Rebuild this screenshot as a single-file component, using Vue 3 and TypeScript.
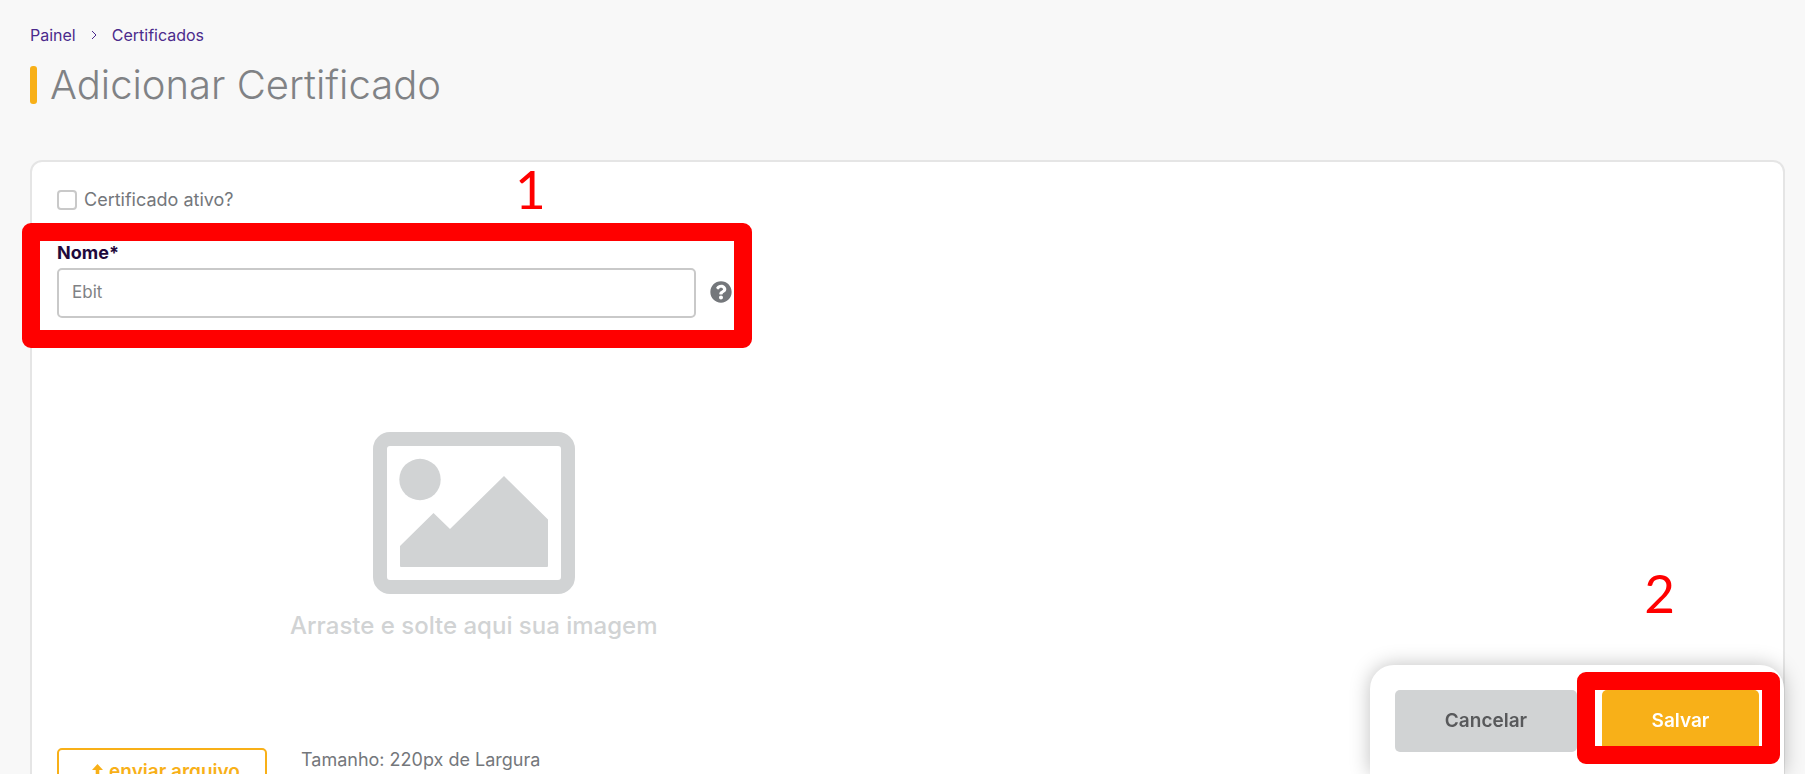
<script setup lang="ts">
import { ref } from 'vue'

const active = ref(false)
const name = ref('Ebit')
</script>

<template>
  <div class="page">
    <nav class="breadcrumb" aria-label="Navegação">
      <a href="#painel">Painel</a>
      <svg class="chevron" viewBox="0 0 6 10" aria-hidden="true"><path d="M1 1l4 4-4 4" /></svg>
      <a href="#certificados">Certificados</a>
    </nav>
    <h1 class="title">Adicionar Certificado</h1>

    <main class="card">
      <label class="check" for="active">
        <input id="active" v-model="active" type="checkbox" />
        <span>Certificado ativo?</span>
      </label>

      <div class="field">
        <label class="field-label" for="name">Nome*</label>
        <div class="field-row">
          <input id="name" v-model="name" class="text-input" type="text" />
          <button class="help" type="button" aria-label="Ajuda">
            <svg viewBox="0 0 512 512" aria-hidden="true">
              <path d="M504 256c0 137-111 248-248 248S8 393 8 256 119 8 256 8s248 111 248 248zM262.700 90c-54.500 0-89.300 23-116.500 63.800-3.500 5.300-2.400 12.400 2.700 16.300l34.700 26.300c5.200 3.900 12.600 3 16.700-2.100 17.900-22.700 30.100-35.800 57.300-35.800 20.400 0 45.700 13.100 45.700 33 0 15-12.400 22.700-32.500 34C247.100 238.500 216 254.900 216 296v4c0 6.600 5.400 12 12 12h56c6.600 0 12-5.400 12-12v-1.300c0-28.500 83.200-29.600 83.200-106.700 0-58-60.200-102-116.500-102zM256 338c-25.400 0-46 20.600-46 46s20.600 46 46 46 46-20.600 46-46-20.600-46-46-46z" />
            </svg>
          </button>
        </div>
        <div class="callout callout-field"></div>
        <span class="step step-one">1</span>
      </div>

      <div class="drop">
        <svg class="picture" viewBox="0 0 202 162" aria-hidden="true">
          <rect x="7" y="7" width="188" height="148" rx="10" fill="none" stroke="currentColor" stroke-width="14" />
          <circle cx="47" cy="47.500" r="20.700" />
          <path d="M27 114l33.500-33L77 97l54-53 44 43.500V134q0 1-1 1H28q-1 0-1-1z" />
        </svg>
        <p>Arraste e solte aqui sua imagem</p>
      </div>

      <div class="upload">
        <button class="send" type="button">
          <svg viewBox="0 0 11 17" aria-hidden="true"><path d="M5.500 0L11 6H7.300V14.500H3.700V6H0z" /></svg>
          enviar arquivo
        </button>
        <p>Tamanho: 220px de Largura</p>
      </div>
    </main>

    <footer class="actions">
      <button class="cancel" type="button">Cancelar</button>
      <button class="save" type="button">Salvar</button>
      <div class="callout callout-save"></div>
      <span class="step step-two">2</span>
    </footer>
  </div>
</template>

<style>
body {
  margin: 0;
  background: #f8f8f8;
}
</style>

<style scoped>
.page {
  box-sizing: border-box;
  height: 100vh;
  overflow: hidden;
  padding: 23px 20px 0 30px;
  background: #f8f8f8;
  color: #74777b;
  font-family: Inter, "Open Sans", sans-serif;
  font-size: 18px;
  line-height: 24px;
}

button,
input {
  box-sizing: border-box;
  margin: 0;
  font: inherit;
}

button {
  cursor: pointer;
}

.breadcrumb {
  display: flex;
  align-items: center;
  gap: 15px;
  font-size: 16px;
  line-height: 24px;
}

.breadcrumb a {
  color: #4b2a8c;
  text-decoration: none;
}

.chevron {
  width: 6px;
  height: 10px;
  fill: none;
  stroke: #4b2a8c;
}

.title {
  display: flex;
  align-items: center;
  gap: 13px;
  margin: 19px 0 56px;
  color: #808285;
  font-size: 40px;
  font-weight: 300;
  line-height: 38px;
}

.title::before {
  content: "";
  width: 7px;
  height: 38px;
  border-radius: 3px;
  background: #f8b018;
}

.card {
  padding: 28px 25px 40px;
  border: 2px solid #e5e5e5;
  border-radius: 12px;
  background: #fff;
}

.check {
  display: flex;
  align-items: center;
  gap: 7px;
  width: fit-content;
  height: 20px;
}

.check input {
  appearance: none;
  width: 20px;
  height: 20px;
  border: 2px solid #c9c9c9;
  border-radius: 4px;
  background: #fff;
}

.check input:checked {
  background: #f8b018;
}

.field {
  position: relative;
  width: 675px;
  max-width: 100%;
  margin-top: 31px;
}

.field-label {
  display: block;
  height: 27px;
  color: #1f0a3c;
  font-weight: 700;
}

.field-row {
  display: flex;
  align-items: center;
  gap: 14px;
}

.text-input {
  flex: 1;
  min-width: 0;
  height: 50px;
  padding: 0 13px 2px;
  border: 2px solid #c9c9c9;
  border-radius: 5px;
  background: #fff;
  color: #808285;
  font-size: 17px;
  outline: none;
}

.help {
  display: flex;
  padding: 0 0 2px;
  border: 0;
  background: none;
}

.help svg {
  width: 22px;
  height: 22px;
  fill: #74777b;
}

.callout {
  position: absolute;
  border: 18px solid #f00;
  border-radius: 9px;
  pointer-events: none;
}

.callout-field {
  inset: -18px -20px -30px -35px;
}

.step {
  position: absolute;
  color: #f00;
  font-family: Lato, sans-serif;
  font-size: 53px;
  line-height: 53px;
}

.step-one {
  top: -79px;
  left: 458px;
}

.drop {
  display: flex;
  flex-direction: column;
  align-items: center;
  gap: 20px;
  width: 49%;
  margin-top: 114px;
  color: #d1d3d4;
}

.picture {
  width: 202px;
  height: 162px;
  fill: currentColor;
}

.drop p {
  margin: 0;
  font-size: 24px;
  font-weight: 500;
  line-height: 24px;
}

.upload {
  display: flex;
  align-items: flex-start;
  gap: 34px;
  margin-top: 110px;
}

.upload p {
  margin: 0;
}

.send {
  display: flex;
  align-items: center;
  justify-content: center;
  gap: 6px;
  width: 210px;
  height: 48px;
  padding: 0 0 0 8px;
  border: 2px solid #f8b018;
  border-radius: 5px;
  background: #fff;
  color: #f8b018;
  font-size: 19px;
  font-weight: 600;
}

.send svg {
  width: 11px;
  height: 17px;
  fill: currentColor;
}

.actions {
  position: fixed;
  right: 21px;
  bottom: 0;
  display: flex;
  gap: 25px;
  padding: 25px 25px 22px;
  border-radius: 24px 24px 0 0;
  background: #fff;
  box-shadow: 0 0 20px rgba(0, 0, 0, 0.25);
}

.cancel,
.save {
  height: 62px;
  padding: 0;
  border: 0;
  border-radius: 5px;
  font-size: 19px;
  font-weight: 600;
}

.cancel {
  width: 182px;
  background: #d1d3d4;
  color: #58595b;
}

.save {
  width: 157px;
  background: #f8b018;
  color: #fff;
}

.callout-save {
  top: 7px;
  right: 4px;
  width: 167px;
  height: 56px;
}

.step-two {
  top: -99px;
  right: 109px;
}
</style>
